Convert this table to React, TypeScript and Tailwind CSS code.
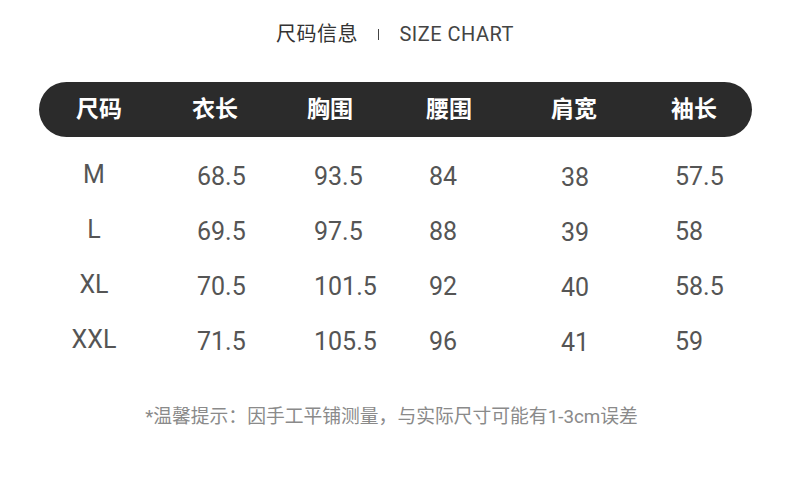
import React from 'react';

const headers = ['尺码', '衣长', '胸围', '腰围', '肩宽', '袖长'];
const headerCols = 'grid-cols-[116px_115px_119px_125px_120px_1fr]';
const dataCols = 'grid-cols-[158px_117px_115px_132px_114px_1fr]';

const rows = [
  ['M', '68.5', '93.5', '84', '38', '57.5'],
  ['L', '69.5', '97.5', '88', '39', '58'],
  ['XL', '70.5', '101.5', '92', '40', '58.5'],
  ['XXL', '71.5', '105.5', '96', '41', '59'],
];

const font = "font-['Roboto','Noto_Sans_CJK_SC',sans-serif]";

const App: React.FC = () => {
  return (
    <div className={`w-[790px] h-[501px] bg-white ${font}`}>
      <div className="h-[82px] flex items-start justify-center pt-[20px]">
        <div className="flex items-center h-[28px]">
          <span className="text-[20px] text-[#333] tracking-[0.5px]">尺码信息</span>
          <span className="mx-[20px] w-[1.5px] h-[11px] bg-[#444]" />
          <span className="text-[20px] text-[#444] tracking-[0.5px]">SIZE CHART</span>
        </div>
      </div>

      <div className="ml-[39px] w-[713px]">
        <div className={`h-[55px] rounded-full bg-[#2b2b2b] grid ${headerCols} items-center pl-[37px]`}>
          {headers.map((h) => (
            <span key={h} className="text-[23px] font-bold text-white leading-none">
              {h}
            </span>
          ))}
        </div>

        <div className="pt-[11px]">
          {rows.map((r) => (
            <div key={r[0]} className={`h-[55px] grid ${dataCols} items-center text-[25px] text-[#555]`}>
              <span className="w-[110px] text-center -mt-[2px]">{r[0]}</span>
              {r.slice(1).map((v, i) => (
                <span key={i} className={i === 3 ? 'mt-[5px]' : 'mt-[3px]'}>
                  {v}
                </span>
              ))}
            </div>
          ))}
        </div>
      </div>

      <div className="mt-[35px] text-center text-[18.8px] text-[#8a8a8a] pr-[7px]">
        *温馨提示：因手工平铺测量，与实际尺寸可能有1-3cm误差
      </div>
    </div>
  );
};

export default App;
